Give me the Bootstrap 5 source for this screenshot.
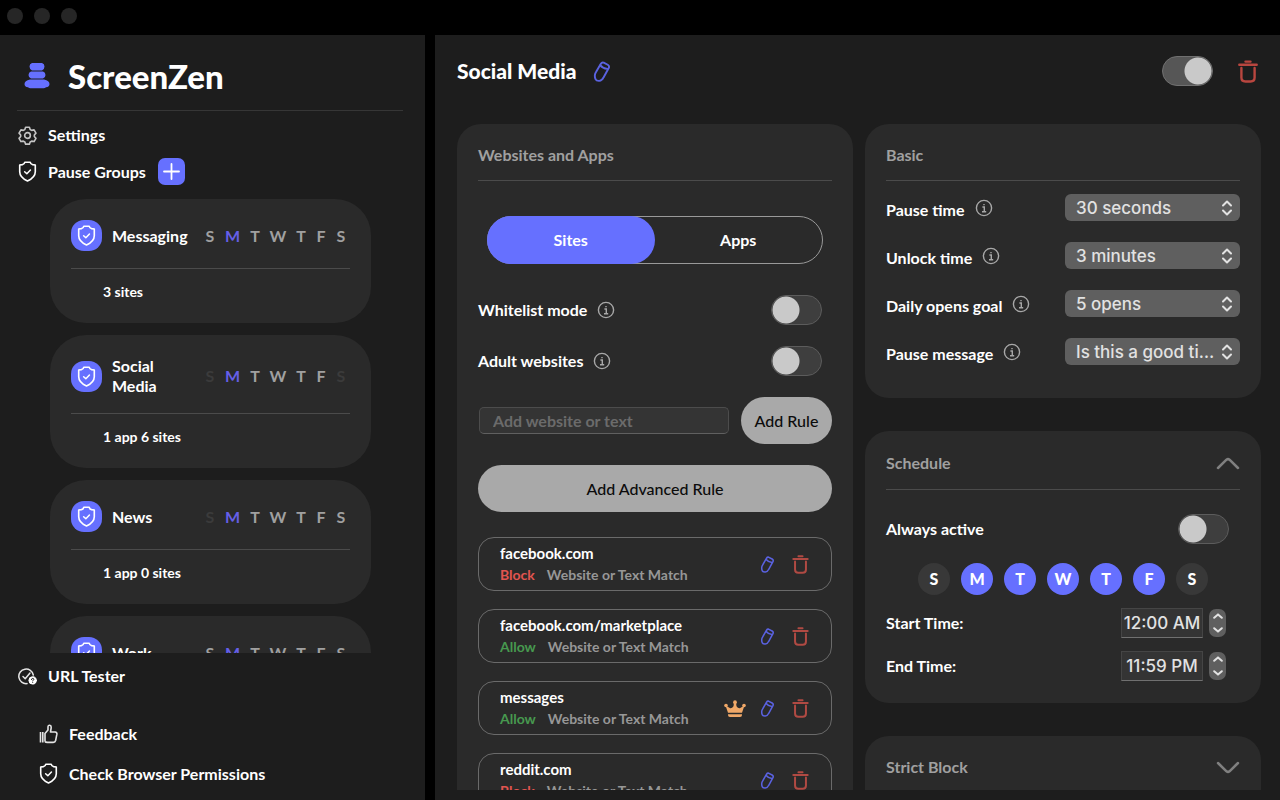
<!DOCTYPE html>
<html lang="en" data-bs-theme="dark">
<head>
<meta charset="utf-8">
<meta name="viewport" content="width=device-width, initial-scale=1">
<title>ScreenZen</title>
<link href="https://cdn.jsdelivr.net/npm/bootstrap@5.3.0/dist/css/bootstrap.min.css" rel="stylesheet">
<style>
:root{--accent:#6670ff;--pane:#1d1d1d;--panel:#2a2a2a;--muted:#a0a0a0;--rule:#4b4b4b}
body{background:#000;color:#fff;font-family:Lato,"Open Sans",sans-serif;font-size:16px;line-height:20px;font-weight:700}
svg{flex:none;display:block}
.titlebar{height:35px;padding:8px 7px;column-gap:11px}
.dot{width:16px;height:16px;background:#262626}
.shell{display:grid;grid-template-columns:85fr 169fr;column-gap:10px;min-height:0}
.pane{background:var(--pane);min-width:0;min-height:0}
.line{border-top:1px solid var(--rule)}
.icon-btn{background:none;border:0;padding:0;display:block}

/* sidebar */
.brand-row{padding:21px 0 0 24px;column-gap:18px}
.brand{font-size:33px;line-height:40px;font-weight:900}
.side-rule{margin:14px 22px 0 17px;border-top:1px solid #363636}
.side-link,.side-link:hover{color:#fff;text-decoration:none;display:flex;align-items:center;column-gap:11px}
.nav-a{padding:14px 0 0 18px}
.nav-b{padding:13px 0 0 18px;column-gap:12px}
.btn-plus{width:27px;height:27px;background:var(--accent);border-radius:7px}
.group-list{margin:14px 54px 0 50px;overflow:hidden;min-height:0;row-gap:12px}
.group-card{background:var(--panel);border-radius:36px;padding:21px}
.group-icon{width:31px;height:31px;border-radius:13px;background:var(--accent)}
.group-name{width:80px;margin-left:10px}
.group-line{margin-top:17px}
.week{display:grid;grid-template-columns:20px 25px 20px 26px 20px 20px 20px;margin-right:-1px;text-align:center;color:var(--muted);font-size:16px}
.week .off{color:#3b3b3b}
.week .now{color:#655fe8}
.group-count{padding:13px 0 0 32px;font-size:14px}
.foot-a{padding:13px 0 0 18px}
.foot-b{padding:38px 0 0 39px}
.foot-c{padding:19px 0 16px 39px}

/* main pane */
.main-pane{padding:0 19px 10px 22px}
.main-head{height:89px;padding:0 3px 17px 0}
.page-title{font-size:21px;line-height:28px;font-weight:900}
.head-trash{color:#b9463f;margin-left:25px}
.head-edit{color:#5a62e0}
.columns{display:grid;grid-template-columns:1fr 1fr;column-gap:12px;overflow:hidden;min-height:0}
.panel{background:var(--panel);border-radius:24px;padding:21px 21px 0}
.panel-title{color:var(--muted);font-size:16px;line-height:20px;margin:0;font-weight:700}
.head-rule{margin-top:15px}
.info{color:#a8a8a8;margin-left:10px}
.tabs{margin:35px 9px 0;height:48px;border:1px solid #999;border-radius:24px}
.tabs button{flex:1;background:none;border:0;color:#fff;font-weight:700;font-size:16px;border-radius:24px}
.tabs button.active{background:var(--accent);margin:-1px 0 -1px -1px}
.toggle.form-check-input{width:51px;height:30px;margin:0;flex:none;background-color:#3e3e3e;border:1px solid #5c5c5c;border-radius:15px;background-image:radial-gradient(circle,#c9c9c9 13px,transparent 14px);background-size:28px 28px;background-position:0 0;background-repeat:no-repeat}
.toggle.form-check-input:checked{background-color:#565656;border-color:#707070;background-position:right 0;background-size:28px 28px;background-image:radial-gradient(circle,#c9c9c9 13px,transparent 14px)}
.opt{height:30px;margin:21px 10px 0 0}
.opt.opt-first{margin-top:31px}
.add-row{margin-top:21px;column-gap:12px}
.rule-input{min-width:0;margin-left:1px;height:27px;background:#343434;border:1px solid #4c4c4c;border-bottom-color:#606060;border-radius:5px;color:#ddd;font-size:16px;font-weight:700;padding:0 13px}
.rule-input::placeholder{color:#6b6b6b;opacity:1}
.btn-grey{background:#a9a9a9;color:#0c0c0c;border:0;border-radius:24px;height:47px;font-size:16px;font-weight:500;padding:0}
.btn-rule{width:91px}
.btn-adv{margin-top:21px;display:block}
.rules{margin-top:25px;row-gap:18px}
.rule-item{flex:none;height:54px;border:1px solid #6a6a6a;border-radius:16px;padding:5px 22px 0 21px}
.rule-site{font-size:15px}
.rule-sub{column-gap:12px;margin-top:2px;font-size:14px}
.kind{color:#979797}
.block{color:#e25550}
.allow{color:#47994f}
.rule-tools{height:43px;column-gap:17px}
.tool-edit{color:#5a62e0}
.tool-del{color:#b04a43}
.crown{color:#f0a868;margin-right:-3px}

/* right-hand panels */
.side-panels{row-gap:33px}
.basic{height:274px}
.settings{padding-top:13px}
.setting{height:48px}
.setting label{padding-top:6px}
.setting .info{margin-top:5px}
.native{font-family:Inter,sans-serif;font-weight:500;color:#e2e2e2}
.pick{width:175px;height:27px;border:0;border-radius:6px;background:#5f5f5f url("data:image/svg+xml,%3Csvg xmlns='http://www.w3.org/2000/svg' width='12' height='16' fill='none' stroke='%23e2e2e2' stroke-width='2' stroke-linecap='round' stroke-linejoin='round'%3E%3Cpath d='M2 5.500l4-4 4 4M2 10.500l4 4 4-4'/%3E%3C/svg%3E") no-repeat right 7px center;appearance:none;padding:0 22px 0 11px;font-size:17px;line-height:24px;text-overflow:ellipsis}
.schedule{height:272px;padding-top:22px}
.sched-rule{margin-top:16px}
.always{height:30px;margin:24px 11px 0 0}
.days{column-gap:11px;margin-top:19px}
.day input{position:absolute;opacity:0}
.day span{display:block;width:32px;height:32px;line-height:32px;border-radius:50%;background:#383838;text-align:center;font-weight:900;font-size:16px}
.day input:checked+span{background:var(--accent)}
.time-row{height:30px;margin:13px 14px 0 0;column-gap:6px}
.clock{width:82px;height:30px;background:#343434;border:1px solid #454545;border-bottom-color:#707070;font-size:17px;padding:0;text-align:center}
.stepper{width:17px;height:28px;border-radius:7px;background:#5f5f5f}
.stepper button{flex:1;border:0;background:none;padding:0;display:flex;align-items:center;justify-content:center}
.strict{height:100px}
</style>
</head>
<body class="vh-100 overflow-hidden d-flex flex-column">
<svg width="0" height="0" class="position-absolute" aria-hidden="true">
  <symbol id="shield" viewBox="0 0 20 22"><path d="M7.200 1.200h5.600q.4 2.200 2.600 2.600 1.400.2 2.800.4v7c0 4.600-3.500 7.600-8.200 9.700-4.700-2.100-8.200-5.100-8.200-9.700v-7q1.400-.2 2.800-.4 2.200-.4 2.600-2.600z" fill="none" stroke="currentColor" stroke-width="1.700" stroke-linejoin="round"/><path d="M7 11.200l2.300 2.200 3.800-3.900" fill="none" stroke="currentColor" stroke-width="1.600" stroke-linecap="round" stroke-linejoin="round"/></symbol>
  <symbol id="pencil" viewBox="0 0 18 22"><g fill="none" stroke="currentColor" stroke-width="2" stroke-linejoin="round" stroke-linecap="round"><path d="M7.800 2.800Q8.900 1 10.800 1.700L15 3.900Q17 5.100 16.200 7L10.600 17.200Q9 20.600 6.200 20.800 3.200 21 2.300 19.200 1.400 17.600 1.500 15.200 1.600 13.400 2.600 11.800z"/><path d="M7.300 4.600Q9.500 7.600 14.700 8.300"/></g></symbol>
  <symbol id="trash" viewBox="0 0 20 23"><g fill="none" stroke="currentColor" stroke-linecap="round" stroke-linejoin="round"><path d="M1.300 4.800h17.400M7.500 1.600h5" stroke-width="2.400"/><path d="M3.400 8v9.500q0 4 4 4h5.200q4 0 4-4V8" stroke-width="2.400"/></g></symbol>
  <symbol id="info" viewBox="0 0 18 18"><circle cx="9" cy="9" r="7.600" fill="none" stroke="currentColor" stroke-width="1.400"/><path d="M7.400 8h1.900v4.400M7 12.700h4.200M9 5v1.200" fill="none" stroke="currentColor" stroke-width="1.400"/></symbol>
  <symbol id="crown" viewBox="0 0 22 18"><g fill="currentColor"><circle cx="11" cy="2.200" r="1.900"/><circle cx="2" cy="5.500" r="1.800"/><circle cx="20" cy="5.500" r="1.800"/><path d="M1.500 5.500l4.700 2.800q2 .2 3.300-2.100L10 2.500h2l.5 3.700q1.300 2.300 3.300 2.100l4.700-2.800L18 12.800H4zM4 14.200h14v.9q0 2-2 2H6q-2 0-2-2z"/></g></symbol>
  <symbol id="up" viewBox="0 0 10 6"><path d="M1.200 4.800L5 1.400l3.800 3.400" fill="none" stroke="#e2e2e2" stroke-width="2" stroke-linecap="round" stroke-linejoin="round"/></symbol>
  <symbol id="down" viewBox="0 0 10 6"><path d="M1.200 1.200L5 4.600l3.800-3.400" fill="none" stroke="#e2e2e2" stroke-width="2" stroke-linecap="round" stroke-linejoin="round"/></symbol>
</svg>
<header class="titlebar d-flex flex-shrink-0">
  <span class="dot rounded-circle"></span><span class="dot rounded-circle"></span><span class="dot rounded-circle"></span>
</header>
<div class="shell flex-grow-1">
  <aside class="pane d-flex flex-column">
    <div class="brand-row d-flex align-items-center">
      <svg width="26" height="26" viewBox="0 0 26 26" fill="#6670ff"><path d="M8 0h10q2.500.8 2.500 3.600 0 3-2.500 3.800H8Q5.500 6.600 5.500 3.600 5.500.8 8 0zM7 8.500h12q2.500.8 2.500 3.400 0 2.800-2.500 3.500H7q-2.500-.7-2.500-3.500Q4.500 9.300 7 8.500z"/><path d="M6 16.400h14q5.500 1 5.500 4.500 0 2.900-3.500 3.300-1 1-2.500 1h-13q-1.500 0-2.500-1Q.5 23.800.5 20.900.500 17.400 6 16.400z"/></svg>
      <span class="brand">ScreenZen</span>
    </div>
    <div class="side-rule"></div>
    <a class="side-link nav-a" href="#">
      <svg width="19" height="19" viewBox="0 0 20 20" fill="none" stroke="#c4c4c4" stroke-width="1.700" stroke-linejoin="round"><path d="M8 1.300h4l.8 2.400 1.600.9 2.500-.5 2 3.400-1.700 1.900v1.700l1.700 1.900-2 3.400-2.500-.5-1.600.9-.8 2.300H8l-.8-2.300-1.600-.9-2.500.5-2-3.400 1.700-1.900V9.400L1.100 7.500l2-3.400 2.500.5 1.600-.9z"/><circle cx="10" cy="10" r="3"/></svg>Settings</a>
    <div class="nav-b d-flex align-items-center">
      <a class="side-link" href="#"><svg width="19" height="21"><use href="#shield"/></svg>Pause Groups</a>
      <button class="btn-plus border-0 p-0 d-flex align-items-center justify-content-center" aria-label="Add pause group"><svg width="17" height="17" viewBox="0 0 17 17" stroke="#fff" stroke-width="1.800" stroke-linecap="round"><path d="M8.500 1v15M1 8.500h15"/></svg></button>
    </div>
    <div class="group-list flex-grow-1 d-flex flex-column" id="groups"></div>
    <footer>
      <a class="side-link foot-a" href="#"><svg width="19" height="17" viewBox="0 0 19 17" fill="none" stroke="#e4e4e4" stroke-width="1.500" stroke-linecap="round" stroke-linejoin="round"><path d="M9 15.600A7.300 7.300 0 1 1 15.300 7"/><path d="M5 8.500l2.200 2.200L12 5"/><circle cx="14.600" cy="12.400" r="3.700" fill="#fff" stroke="#fff" stroke-width="1"/><path d="M13.500 11.600q0-1.200 1.200-1.200t1.100 1.100q0 .7-1.100 1.300M14.700 14.300v.1" stroke="#1d1d1d" stroke-width="1"/></svg>URL Tester</a>
      <a class="side-link foot-b" href="#"><svg width="19" height="20" viewBox="0 0 19 20" fill="none" stroke="#e4e4e4" stroke-width="1.600" stroke-linejoin="round"><path d="M1.500 8v10.500M3.800 8v10.500M6 17.500V9.500L9 6V2.800Q9.200 1 10.800 1.200 12.400 1.600 12.200 3.600L11.500 8h4.700q1.900.2 1.700 2.200l-1.200 6q-.5 2-2.500 2.200H8.500q-2-.1-2.500-.9"/></svg>Feedback</a>
      <a class="side-link foot-c" href="#"><svg width="19" height="21"><use href="#shield"/></svg>Check Browser Permissions</a>
    </footer>
  </aside>

  <main class="pane main-pane d-flex flex-column">
    <div class="main-head d-flex align-items-center flex-shrink-0">
      <h1 class="page-title mb-0">Social Media</h1>
      <button class="icon-btn head-edit ms-3" aria-label="Rename"><svg width="18" height="21"><use href="#pencil"/></svg></button>
      <input type="checkbox" role="switch" class="form-check-input toggle ms-auto" checked aria-label="Group enabled">
      <button class="icon-btn head-trash" aria-label="Delete group"><svg width="20" height="23"><use href="#trash"/></svg></button>
    </div>
    <div class="columns flex-grow-1">
      <section class="panel">
        <h2 class="panel-title">Websites and Apps</h2>
        <div class="line head-rule"></div>
        <div class="tabs d-flex"><button class="active">Sites</button><button>Apps</button></div>
        <div class="opt opt-first d-flex align-items-center"><label for="wl">Whitelist mode</label><svg class="info" width="18" height="18"><use href="#info"/></svg><input id="wl" type="checkbox" role="switch" class="form-check-input toggle ms-auto"></div>
        <div class="opt d-flex align-items-center"><label for="ad">Adult websites</label><svg class="info" width="18" height="18"><use href="#info"/></svg><input id="ad" type="checkbox" role="switch" class="form-check-input toggle ms-auto"></div>
        <div class="add-row d-flex align-items-center"><input class="rule-input flex-grow-1" type="text" placeholder="Add website or text" aria-label="Add website or text"><button class="btn-grey btn-rule">Add Rule</button></div>
        <button class="btn-grey btn-adv w-100">Add Advanced Rule</button>
        <div class="rules d-flex flex-column" id="rules"></div>
      </section>
      <div class="d-flex flex-column side-panels">
        <section class="panel basic flex-shrink-0">
          <h2 class="panel-title">Basic</h2>
          <div class="line head-rule"></div>
          <div class="settings">
            <div class="setting d-flex"><label for="s1">Pause time</label><svg class="info" width="18" height="18"><use href="#info"/></svg><select id="s1" class="pick native ms-auto"><option>30 seconds</option></select></div>
            <div class="setting d-flex"><label for="s2">Unlock time</label><svg class="info" width="18" height="18"><use href="#info"/></svg><select id="s2" class="pick native ms-auto"><option>3 minutes</option></select></div>
            <div class="setting d-flex"><label for="s3">Daily opens goal</label><svg class="info" width="18" height="18"><use href="#info"/></svg><select id="s3" class="pick native ms-auto"><option>5 opens</option></select></div>
            <div class="setting d-flex"><label for="s4">Pause message</label><svg class="info" width="18" height="18"><use href="#info"/></svg><select id="s4" class="pick native ms-auto"><option>Is this a good time?</option></select></div>
          </div>
        </section>
        <section class="panel schedule flex-shrink-0">
          <div class="d-flex align-items-center justify-content-between"><h2 class="panel-title">Schedule</h2><button class="icon-btn" aria-label="Collapse schedule"><svg width="24" height="13" viewBox="0 0 24 13" fill="none" stroke="#808080" stroke-width="2.500" stroke-linecap="round" stroke-linejoin="round"><path d="M2 11L10.500 2.700q1.500-1.200 3 0L22 11"/></svg></button></div>
          <div class="line sched-rule"></div>
          <div class="always d-flex align-items-center"><label for="aa">Always active</label><input id="aa" type="checkbox" role="switch" class="form-check-input toggle ms-auto"></div>
          <div class="days d-flex justify-content-center" id="days"></div>
          <div class="time-row d-flex align-items-center"><label for="st">Start Time:</label><input id="st" class="clock native ms-auto" value="12:00 AM"><span class="stepper d-flex flex-column"><button aria-label="Later start"><svg width="10" height="6"><use href="#up"/></svg></button><button aria-label="Earlier start"><svg width="10" height="6"><use href="#down"/></svg></button></span></div>
          <div class="time-row d-flex align-items-center"><label for="et">End Time:</label><input id="et" class="clock native ms-auto" value="11:59 PM"><span class="stepper d-flex flex-column"><button aria-label="Later end"><svg width="10" height="6"><use href="#up"/></svg></button><button aria-label="Earlier end"><svg width="10" height="6"><use href="#down"/></svg></button></span></div>
        </section>
        <section class="panel strict flex-shrink-0">
          <div class="d-flex align-items-center justify-content-between"><h2 class="panel-title">Strict Block</h2><button class="icon-btn" aria-label="Expand strict block"><svg width="24" height="13" viewBox="0 0 24 13" fill="none" stroke="#808080" stroke-width="2.500" stroke-linecap="round" stroke-linejoin="round"><path d="M2 2l8.500 8.300q1.500 1.200 3 0L22 2"/></svg></button></div>
        </section>
      </div>
    </div>
  </main>
</div>
<script>
const week = 'SMTWTFS';
const groups = [
  {name:'Messaging', off:[], count:'3 sites'},
  {name:'Social Media', off:[0,6], count:'1 app 6 sites'},
  {name:'News', off:[0], count:'1 app 0 sites'},
  {name:'Work', off:[], count:''}
];
document.getElementById('groups').innerHTML = groups.map(g => `
  <article class="group-card flex-shrink-0">
    <div class="d-flex align-items-center">
      <span class="group-icon d-flex align-items-center justify-content-center flex-shrink-0"><svg width="19" height="21"><use href="#shield"/></svg></span>
      <span class="group-name">${g.name}</span>
      <span class="week ms-auto">${[...week].map((d,i) => `<span class="${g.off.includes(i) ? 'off' : i === 1 ? 'now' : ''}">${d}</span>`).join('')}</span>
    </div>
    <div class="line group-line"></div>
    <div class="group-count">${g.count}</div>
  </article>`).join('');
const rules = [['facebook.com','Block'],['facebook.com/marketplace','Allow'],['messages','Allow',1],['reddit.com','Block']];
document.getElementById('rules').innerHTML = rules.map(([site,act,crown]) => `
  <div class="rule-item d-flex">
    <div>
      <div class="rule-site">${site}</div>
      <div class="d-flex rule-sub"><span class="${act.toLowerCase()}">${act}</span><span class="kind">Website or Text Match</span></div>
    </div>
    <div class="rule-tools d-flex align-items-center ms-auto">
      ${crown ? '<svg class="crown" width="22" height="18"><use href="#crown"/></svg>' : ''}
      <button class="icon-btn tool-edit" aria-label="Edit rule"><svg width="15" height="17"><use href="#pencil"/></svg></button>
      <button class="icon-btn tool-del" aria-label="Delete rule"><svg width="17" height="19"><use href="#trash"/></svg></button>
    </div>
  </div>`).join('');
document.getElementById('days').innerHTML = [...week].map((d,i) => `<label class="day"><input type="checkbox" ${i > 0 && i < 6 ? 'checked' : ''}><span>${d}</span></label>`).join('');
</script>
<script src="https://cdn.jsdelivr.net/npm/bootstrap@5.3.0/dist/js/bootstrap.bundle.min.js"></script>
</body>
</html>
